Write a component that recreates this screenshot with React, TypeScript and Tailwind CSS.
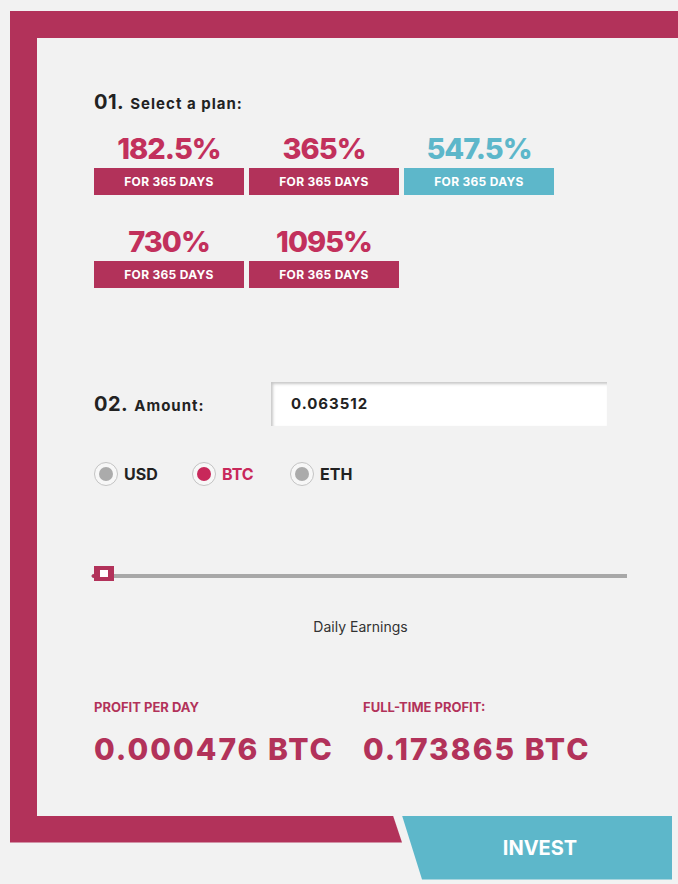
import React, { useState } from 'react'

const plans = [
    { rate: '182.5%', active: false },
    { rate: '365%', active: false },
    { rate: '547.5%', active: true },
    { rate: '730%', active: false },
    { rate: '1095%', active: false },
]

const currencies = ['USD', 'BTC', 'ETH']

const PlanCard = ({ rate, active }: { rate: string; active: boolean }) => (
    <div className="flex w-[150px] flex-col items-center">
        <div className={`text-[29px] font-extrabold leading-[30px] tracking-[-1px] ${active ? 'text-[#5db7ca]' : 'text-[#c2305c]'}`}>
            {rate}
        </div>
        <div className={`mt-[4px] flex h-[27px] w-full items-center justify-center text-[12px] font-bold tracking-[0.3px] text-white ${active ? 'bg-[#5db7ca]' : 'bg-[#b2325a]'}`}>
            FOR 365 DAYS
        </div>
    </div>
)

const Radio = ({ label, checked }: { label: string; checked: boolean }) => (
    <div className="flex w-[98px] items-center gap-[6px]">
        <div className="flex h-[24px] w-[24px] items-center justify-center rounded-full border border-[#c4c4c4] bg-[#f7f7f7]">
            <div className={`h-[14px] w-[14px] rounded-full ${checked ? 'bg-[#c8285a]' : 'bg-[#ababab]'}`} />
        </div>
        <span className={`text-[16px] font-bold ${checked ? 'text-[#c8285a]' : 'text-[#222]'}`}>{label}</span>
    </div>
)

const StepTitle = ({ num, label, className = '' }: { num: string; label: string; className?: string }) => (
    <div className={`flex items-baseline gap-[6px] font-bold ${className}`}>
        <span className="text-[20px] tracking-[0.5px]">{num}</span>
        <span className="text-[15px] tracking-[1px]">{label}</span>
    </div>
)

export default function App() {
    const [currency] = useState('BTC')

    return (
        <div
            className="min-h-screen overflow-hidden bg-[#f2f2f2] pl-[10px] pt-[11px] text-[#222]"
            style={{ fontFamily: 'Inter, "Open Sans", sans-serif' }}
        >
            <div className="border-l-[27px] border-t-[27px] border-[#b2325a]">
                <div className="w-[590px] pb-[50px] pl-[57px] pt-[49px]">
                    {/* step 1 */}
                    <StepTitle num="01." label="Select a plan:" />

                    <div className="mt-[17px] grid w-[460px] grid-cols-[150px_150px_150px] gap-x-[5px] gap-y-[32px]">
                        {plans.map(p => (
                            <PlanCard key={p.rate} rate={p.rate} active={p.active} />
                        ))}
                    </div>

                    {/* step 2 */}
                    <div className="mt-[94px] flex items-center">
                        <StepTitle num="02." label="Amount:" className="w-[177px]" />
                        <div className="flex h-[44px] w-[336px] items-center bg-white pl-[20px] text-[15px] font-bold tracking-[1px] shadow-[inset_2px_2px_3px_rgba(0,0,0,0.22)]">
                            0.063512
                        </div>
                    </div>

                    <div className="mt-[36px] flex">
                        {currencies.map(c => (
                            <Radio key={c} label={c} checked={c === currency} />
                        ))}
                    </div>

                    {/* slider */}
                    <div className="relative mt-[79px] h-[16px] w-[533px]">
                        <div className="absolute left-[-2px] right-0 top-[9px] h-[4px] bg-[#a8a8a8]" />
                        <div className="absolute left-[-3px] top-[8px] h-0 w-0 border-y-[3px] border-r-[4px] border-y-transparent border-r-[#b2325a]" />
                        <div className="absolute left-0 top-[1px] flex h-[15px] w-[20px] items-center justify-center bg-[#b2325a]">
                            <div className="h-[7px] w-[8px] bg-white" />
                        </div>
                    </div>

                    <div className="mt-[35px] w-[533px] text-center text-[14px] text-[#333]">Daily Earnings</div>

                    {/* profit */}
                    <div className="mt-[61px] grid w-[560px] grid-cols-[269px_1fr]">
                        <div>
                            <div className="text-[13px] font-bold text-[#b2325a]">PROFIT PER DAY</div>
                            <div className="mt-[14px] text-[30px] font-extrabold leading-[34px] tracking-[2px] text-[#b2325a]">0.000476 BTC</div>
                        </div>
                        <div>
                            <div className="text-[13px] font-bold text-[#b2325a]">FULL-TIME PROFIT:</div>
                            <div className="mt-[14px] text-[30px] font-extrabold leading-[34px] tracking-[2px] text-[#b2325a]">0.173865 BTC</div>
                        </div>
                    </div>
                </div>
            </div>

            {/* bottom bar + invest */}
            <div className="flex items-start">
                <div
                    className="h-[27px] w-[392px] bg-[#b2325a]"
                    style={{ clipPath: 'polygon(0 0, 383px 0, 100% 100%, 0 100%)' }}
                />
                <button
                    className="flex h-[64px] w-[270px] items-center justify-center bg-[#5db7ca] pl-[6px] text-[20px] font-bold text-white"
                    style={{ clipPath: 'polygon(0 0, 100% 0, 100% 100%, 20px 100%)' }}
                >
                    INVEST
                </button>
            </div>
        </div>
    )
}
